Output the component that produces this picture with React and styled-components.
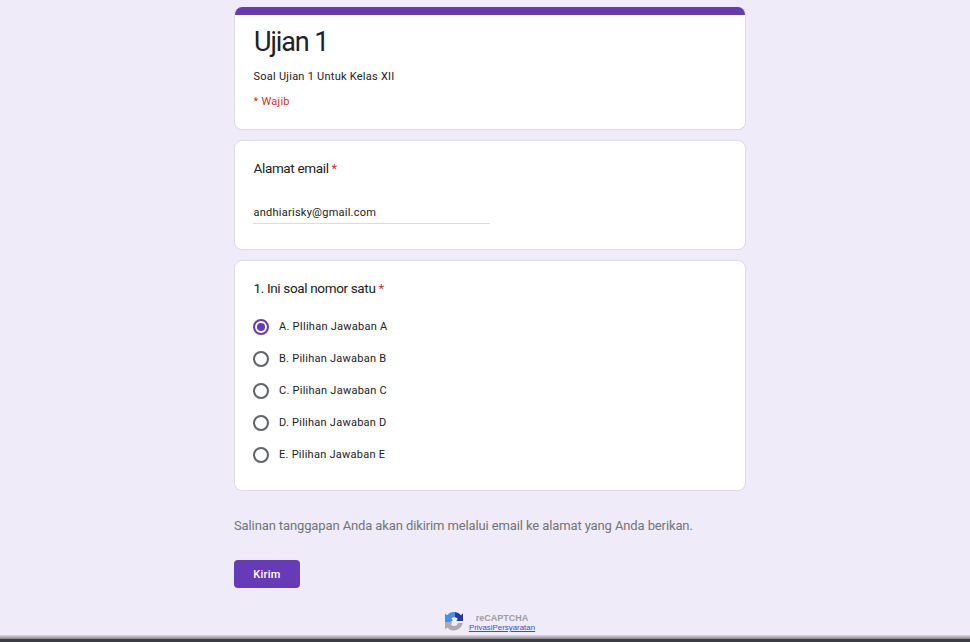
import React from 'react';
import styled, { createGlobalStyle } from 'styled-components';

const GlobalStyle = createGlobalStyle`
  html, body {
    margin: 0;
    padding: 0;
    height: 100%;
    overflow: hidden;
    background: #f0ebf8;
    font-family: Roboto, "Liberation Sans", sans-serif;
  }
`;

const Page = styled.div`
  position: relative;
  height: 642px;
  padding-top: 7px;
  box-sizing: border-box;
  overflow: hidden;
`;

const Column = styled.form`
  width: 512px;
  margin: 0 0 0 234px;
  display: flex;
  flex-direction: column;
  gap: 10px;
`;

const Card = styled.section`
  box-sizing: border-box;
  background: #fff;
  border: 1px solid #dadce0;
  border-radius: 8px;
  padding: 17px 18px;
  height: ${(p) => p.$height}px;
`;

const HeaderCard = styled(Card)`
  position: relative;
  overflow: hidden;
  border-top: none;
  padding: 8px 18px 0;
  &::before {
    content: '';
    display: block;
    height: 8px;
    margin: -8px -18px 0;
    background: #673ab7;
  }
`;

const Title = styled.h1`
  margin: 9px 0 0 1px;
  font-size: 27px;
  line-height: 36px;
  font-weight: 400;
  letter-spacing: -1.1px;
  color: #202124;
`;

const Description = styled.p`
  margin: 9px 0 0;
  padding-left: 0.5px;
  font-size: 11px;
  line-height: 16px;
  letter-spacing: 0.25px;
  color: #202124;
`;

const RequiredNote = styled.p`
  margin: 9px 0 0;
  padding-left: 0.5px;
  font-size: 11px;
  line-height: 16px;
  letter-spacing: 0.25px;
  color: #d93025;
`;

const Question = styled.div`
  padding-left: 0.5px;
  font-size: 13.5px;
  line-height: 20px;
  letter-spacing: -0.35px;
  color: #202124;
`;

const Star = styled.span`
  font-size: 13px;
  color: #d93025;
`;

const EmailValue = styled.div`
  margin-top: 24px;
  padding-left: 0.5px;
  width: 237px;
  height: 21px;
  box-sizing: border-box;
  border-bottom: 1px solid #dadce0;
  font-size: 11px;
  line-height: 20px;
  letter-spacing: 0.25px;
  color: #202124;
`;

const Options = styled.div`
  margin-top: 11px;
  display: flex;
  flex-direction: column;
`;

const Option = styled.label`
  display: flex;
  align-items: center;
  gap: 10px;
  height: 32px;
  font-size: 11px;
  letter-spacing: 0.25px;
  color: #202124;
`;

const Radio = styled.span`
  box-sizing: border-box;
  width: 16px;
  height: 16px;
  margin-top: 2px;
  border-radius: 50%;
  border: 2px solid ${(p) => (p.$checked ? '#673ab7' : '#5f6368')};
  display: flex;
  align-items: center;
  justify-content: center;
  &::after {
    content: '';
    width: 8px;
    height: 8px;
    border-radius: 50%;
    background: ${(p) => (p.$checked ? '#673ab7' : 'transparent')};
  }
`;

const Notice = styled.p`
  margin: 15px 0 0;
  font-size: 13px;
  line-height: 20px;
  letter-spacing: -0.115px;
  color: #70757a;
`;

const SubmitButton = styled.button`
  align-self: flex-start;
  margin-top: 14px;
  width: 66px;
  height: 28px;
  border: none;
  border-radius: 4px;
  background: #673ab7;
  color: #fff;
  font-family: inherit;
  font-size: 11px;
  font-weight: 500;
  letter-spacing: 0.25px;
`;

const Recaptcha = styled.div`
  margin-top: 13px;
  padding-right: 1px;
  display: flex;
  align-items: flex-start;
  justify-content: center;
  gap: 5px;
`;

const RecaptchaText = styled.div`
  padding-top: 2px;
  display: flex;
  flex-direction: column;
  align-items: center;
  font-family: "Liberation Sans", Arial, sans-serif;
`;

const RecaptchaName = styled.span`
  font-size: 9px;
  line-height: 10px;
  font-weight: 700;
  color: #9e9e9e;
`;

const RecaptchaLink = styled.a`
  font-size: 7.9px;
  line-height: 10px;
  color: #3f51b5;
  text-decoration: underline;
`;

const BottomEdge = styled.div`
  position: absolute;
  left: 0;
  right: 0;
  bottom: 0;
  height: 7px;
  background: linear-gradient(to bottom, #e0dbe8 0, #b0aeb6 30%, #8f8d94 50%, #3c3d44 60%, #3c3d44 100%);
`;

const RecaptchaLogo = () => (
  <svg width="20" height="20" viewBox="0 0 20 20" aria-hidden="true">
    <path d="M1 11V2.5l2 1.8A9.2 9.2 0 0 1 11 1v5.2a4 4 0 0 0-3.6 1.2L9 9.6 6.4 11z" fill="#4a90e2" />
    <path d="M11 1a9.2 9.2 0 0 1 6 3.2L19 2.3V10h-6.6l1.4-2.3A4 4 0 0 0 11 6.2z" fill="#1c3aa9" />
    <path d="M1 11h5.4l2 .2-1.4 2.4A4 4 0 0 0 14 12h4.8A9.2 9.2 0 0 1 3.1 16.5L1 18.5z" fill="#ababab" />
  </svg>
);

const options = [
  'A. PIlihan Jawaban A',
  'B. Pilihan Jawaban B',
  'C. Pilihan Jawaban C',
  'D. Pilihan Jawaban D',
  'E. Pilihan Jawaban E',
];

const App = () => {
  return (
    <Page>
      <GlobalStyle />
      <Column onSubmit={(e) => e.preventDefault()}>
        <HeaderCard $height={123}>
          <Title>Ujian 1</Title>
          <Description>Soal Ujian 1 Untuk Kelas XII</Description>
          <RequiredNote>* Wajib</RequiredNote>
        </HeaderCard>

        <Card $height={110}>
          <Question>
            Alamat email <Star>*</Star>
          </Question>
          <EmailValue>andhiarisky@gmail.com</EmailValue>
        </Card>

        <Card $height={231}>
          <Question>
            1. Ini soal nomor satu <Star>*</Star>
          </Question>
          <Options>
            {options.map((o, index) => (
              <Option key={o}>
                <Radio $checked={index === 0} />
                {o}
              </Option>
            ))}
          </Options>
        </Card>

        <Notice>Salinan tanggapan Anda akan dikirim melalui email ke alamat yang Anda berikan.</Notice>
        <SubmitButton type="button">Kirim</SubmitButton>

        <Recaptcha>
          <RecaptchaLogo />
          <RecaptchaText>
            <RecaptchaName>reCAPTCHA</RecaptchaName>
            <RecaptchaLink>PrivasiPersyaratan</RecaptchaLink>
          </RecaptchaText>
        </Recaptcha>
      </Column>
      <BottomEdge />
    </Page>
  );
};

export default App;
